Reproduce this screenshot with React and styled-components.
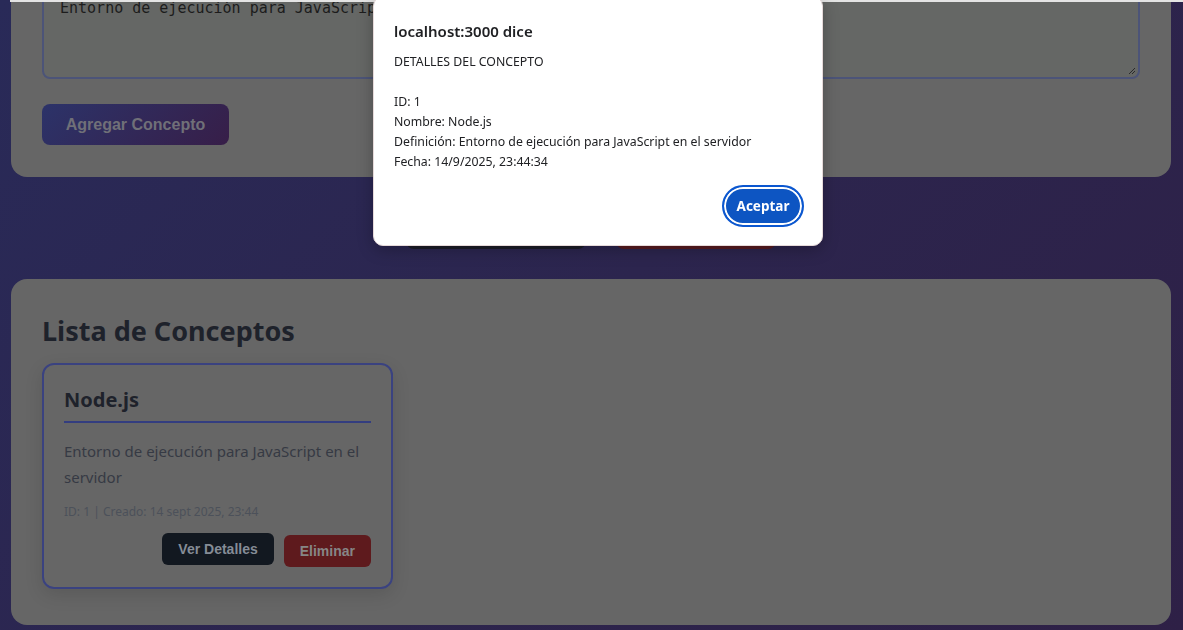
import React from 'react'
import styled, { createGlobalStyle } from 'styled-components'

const Global = createGlobalStyle`
  * { box-sizing: border-box; }
  html, body { margin: 0; padding: 0; height: 100%; overflow: hidden; }
  body {
    font-family: "Noto Sans", "Open Sans", sans-serif;
    background: linear-gradient(135deg, #292a58 0%, #2c254e 50%, #2e2046 100%);
  }
`

const Page = styled.div`
  width: 1160px;
  margin-left: 11px;
  margin-top: -46px;
`

const Panel = styled.section`
  background: #666666;
  border-radius: 16px;
  padding: 31px 31px ${({ $bottom }) => $bottom || 32}px;
`

const TextArea = styled.div`
  height: 94px;
  border: 2px solid #4c5478;
  border-radius: 8px;
  background: #656765;
  padding: 10px 16px;
  font-family: "DejaVu Sans Mono", "Liberation Mono", monospace;
  font-size: 15px;
  line-height: 22px;
  color: #1c1c1c;
  position: relative;
`

const Grip = styled.svg`
  position: absolute;
  right: 2px;
  bottom: 2px;
`

const AddButton = styled.button`
  margin-top: 25px;
  width: 187px;
  height: 41px;
  border: none;
  border-radius: 8px;
  background: linear-gradient(135deg, #2c3369 0%, #371e48 100%);
  color: #707078;
  font-family: "Liberation Sans", Arial, sans-serif;
  font-weight: 700;
  font-size: 16px;
`

const Actions = styled.div`
  display: flex;
  justify-content: center;
  gap: 30px;
  margin: 30px 0 30px;
`

const WideButton = styled.button`
  width: ${({ $w }) => $w}px;
  height: 42px;
  border: none;
  border-radius: 8px;
  background: ${({ $bg }) => $bg};
`

const Heading = styled.h2`
  margin: 4px 0 15px;
  font-size: 27px;
  line-height: 34px;
  font-weight: 700;
  color: #1e222b;
`

const Grid = styled.div`
  display: grid;
  grid-template-columns: repeat(3, 351px);
  gap: 20px;
`

const ConceptCard = styled.div`
  border: 2px solid #3a4280;
  border-radius: 12px;
  padding: 20px;
  box-shadow: 0 6px 18px rgba(0, 0, 0, 0.12);
`

const ConceptTitle = styled.h3`
  margin: 0;
  padding-bottom: 6px;
  border-bottom: 2px solid #333d80;
  font-size: 20px;
  line-height: 30px;
  font-weight: 700;
  color: #1e222b;
`

const Description = styled.p`
  margin: 15px 0 13px;
  font-size: 15px;
  line-height: 26px;
  color: #363a44;
`

const Meta = styled.div`
  font-size: 12px;
  line-height: 18px;
  color: #4c515a;
`

const ButtonRow = styled.div`
  display: flex;
  justify-content: flex-end;
  align-items: flex-start;
  gap: 10px;
  margin-top: 12px;
`

const SmallButton = styled.button`
  height: 32px;
  padding: 0 16px;
  border: none;
  border-radius: 6px;
  background: ${({ $bg }) => $bg};
  color: ${({ $fg }) => $fg};
  font-family: "Liberation Sans", Arial, sans-serif;
  font-weight: 700;
  font-size: 14px;
  margin-top: ${({ $drop }) => $drop || 0}px;
`

const TopStrip = styled.div`
  position: fixed;
  top: 0;
  left: 10px;
  right: 0;
  height: 2px;
  background: #e4e4e4;
`

const Dialog = styled.div`
  position: fixed;
  left: 373px;
  top: -4px;
  width: 450px;
  height: 250px;
  background: #ffffff;
  border: 1px solid #e6dada;
  border-radius: 10px;
  box-shadow: 0 4px 16px rgba(0, 0, 0, 0.25);
  padding: 23px 20px 0 20px;
  display: flex;
  flex-direction: column;
  font-family: "Noto Sans", "Open Sans", sans-serif;
  color: #202124;
`

const DialogTitle = styled.div`
  font-size: 15px;
  font-weight: 600;
  line-height: 22px;
  margin-bottom: 10px;
`

const DialogBody = styled.div`
  font-size: 12.3px;
  line-height: 20px;
  white-space: pre-line;
`

const DialogFooter = styled.div`
  display: flex;
  justify-content: flex-end;
  margin-top: 13px;
`

const Accept = styled.button`
  width: 82px;
  height: 42px;
  border-radius: 21px;
  border: 2px solid #0b57d0;
  box-shadow: inset 0 0 0 2px #ffffff;
  background: #0d55c2;
  color: #ffffff;
  font-family: "Noto Sans", "Open Sans", sans-serif;
  font-size: 13.5px;
  font-weight: 700;
  margin-right: -2px;
`

export default function App() {
  return (
    <>
      <Global />
      <Page>
        <Panel>
          <TextArea>
            Entorno de ejecución para JavaScript en el servidor
            <Grip width="10" height="10" viewBox="0 0 10 10">
              <path d="M9 3 L3 9 M9 6 L6 9" stroke="#2a2a2a" strokeWidth="1" />
            </Grip>
          </TextArea>
          <AddButton>Agregar Concepto</AddButton>
        </Panel>

        <Actions>
          <WideButton $w={180} $bg="#1c1d28" />
          <WideButton $w={160} $bg="#581c21" />
        </Actions>

        <Panel $bottom={36}>
          <Heading>Lista de Conceptos</Heading>
          <Grid>
            <ConceptCard>
              <ConceptTitle>Node.js</ConceptTitle>
              <Description>Entorno de ejecución para JavaScript en el servidor</Description>
              <Meta>ID: 1 | Creado: 14 sept 2025, 23:44</Meta>
              <ButtonRow>
                <SmallButton $bg="#121820" $fg="#858c96">Ver Detalles</SmallButton>
                <SmallButton $bg="#5e1a1d" $fg="#868686" $drop={2}>Eliminar</SmallButton>
              </ButtonRow>
            </ConceptCard>
          </Grid>
        </Panel>
      </Page>

      <TopStrip />
      <Dialog>
        <DialogTitle>localhost:3000 dice</DialogTitle>
        <DialogBody>
          {'DETALLES DEL CONCEPTO\n\nID: 1\nNombre: Node.js\nDefinición: Entorno de ejecución para JavaScript en el servidor\nFecha: 14/9/2025, 23:44:34'}
        </DialogBody>
        <DialogFooter>
          <Accept>Aceptar</Accept>
        </DialogFooter>
      </Dialog>
    </>
  )
}
